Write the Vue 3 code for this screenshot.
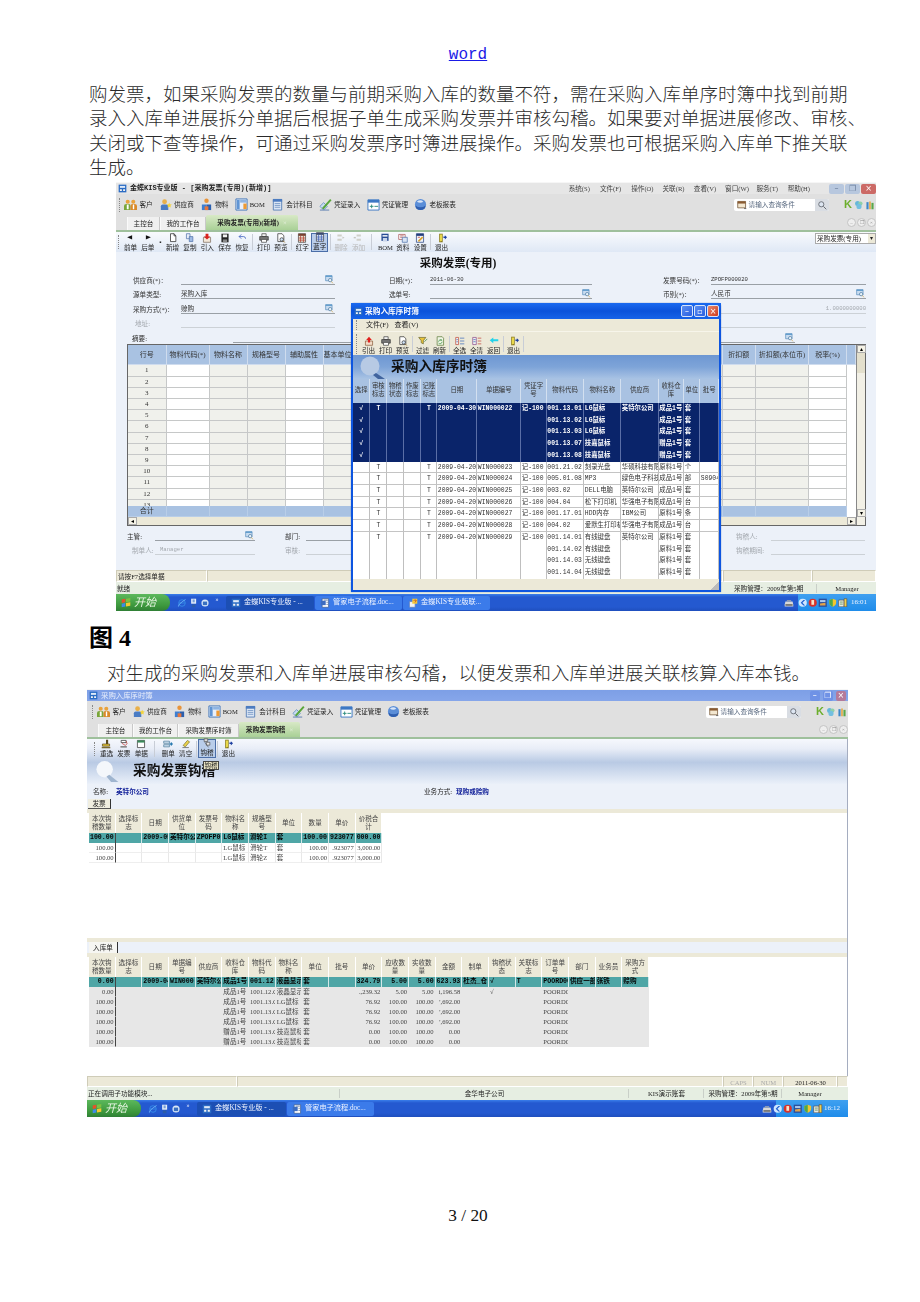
<template>
  <div class="page">
    <div class="word"><u>word</u></div>
    <p class="para">
      <span v-for="line in para1" :key="line" class="ln">{{ line }}</span>
    </p>

    <!-- first screenshot: purchase invoice form -->
    <section class="shot s1">
      <div class="title">
        <svg class="ico t-ico" viewBox="0 0 14 14"><path v-for="(p, i) in icons.app" :key="i" :d="p[0]" :fill="p[1]" /></svg>
        <b class="mono7">金蝶KIS专业版 - [采购发票(专用)(新增)]</b>
        <div class="menus">
          <span v-for="m in mainMenu" :key="m">{{ m }}</span>
        </div>
        <div class="wbtns muted">
          <i class="wb">–</i><i class="wb">❐</i><i class="wb red">×</i>
        </div>
      </div>
      <div class="tb1">
        <span class="grip"></span>
        <div v-for="item in tb1" :key="item[1]" class="tb1-item">
          <svg class="ico" viewBox="0 0 14 14"><path v-for="(p, i) in icons[item[0]]" :key="i" :d="p[0]" :fill="p[1]" :stroke="p[2] || 'none'" /></svg>
          <span>{{ item[1] }}</span>
        </div>
        <div class="search">
          <svg class="ico small" viewBox="0 0 14 14"><path v-for="(p, i) in icons.cal" :key="i" :d="p[0]" :fill="p[1]" :stroke="p[2] || 'none'" /></svg>
          <span>请输入查询条件</span>
          <em class="search-btn"><svg class="ico small" viewBox="0 0 14 14"><path v-for="(p, i) in icons.lens" :key="i" :d="p[0]" :fill="p[1]" :stroke="p[2] || 'none'" /></svg></em>
        </div>
        <div class="brand">
          <b>K</b>
          <svg class="ico small" viewBox="0 0 14 14"><path v-for="(p, i) in icons.recycle" :key="i" :d="p[0]" :fill="p[1]" /></svg>
          <svg class="ico small" viewBox="0 0 14 14"><path v-for="(p, i) in icons.runner" :key="i" :d="p[0]" :fill="p[1]" /></svg>
        </div>
      </div>
      <div class="tabs">
        <span class="tab w33">主控台</span>
        <span class="tab w46">我的工作台</span>
        <span class="tab on w92">采购发票(专用)(新增) <i>×</i></span>
        <span class="dots"><i>–</i><i>❐</i><i>×</i></span>
      </div>
      <div class="gline"></div>
      <div class="tb2 p8">
        <span class="grip"></span>
        <template v-for="(item, k) in tb2a" :key="k">
          <span v-if="item.sep" :class="['sep', { wide: item.wide }]"></span>
          <span v-else-if="item.dot" class="dot">▪</span>
          <div v-else :class="['tb2-item', { hl: item.hl, off: item.off }]">
            <svg class="ico" viewBox="0 0 14 14"><path v-for="(p, i) in icons[item.i]" :key="i" :d="p[0]" :fill="p[1]" :stroke="p[2] || 'none'" /></svg>
            <span>{{ item.t }}</span>
          </div>
        </template>
        <div class="combo">采购发票(专用)<em>▾</em></div>
      </div>

      <div class="form">
        <h2 class="form-title">采购发票(专用)</h2>
        <div class="frow">
          <div class="field"><label class="l48">供应商(*)：</label><div class="val"><svg class="ico lookup" viewBox="0 0 14 14"><path v-for="(p, i) in icons.lookup" :key="i" :d="p[0]" :fill="p[1]" :stroke="p[2] || 'none'" /></svg></div></div>
          <div class="field"><label class="l41">日期(*)：</label><div class="val tiny">2011-06-30</div></div>
          <div class="field"><label class="l48">发票号码(*)：</label><div class="val tiny">ZPOFP000020</div></div>
        </div>
        <div class="frow">
          <div class="field"><label class="l48">源单类型:</label><div class="val">采购入库</div></div>
          <div class="field"><label class="l41">选单号:</label><div class="val"><svg class="ico lookup" viewBox="0 0 14 14"><path v-for="(p, i) in icons.lookup" :key="i" :d="p[0]" :fill="p[1]" :stroke="p[2] || 'none'" /></svg></div></div>
          <div class="field"><label class="l48">币别(*)：</label><div class="val">人民币<svg class="ico lookup" viewBox="0 0 14 14"><path v-for="(p, i) in icons.lookup" :key="i" :d="p[0]" :fill="p[1]" :stroke="p[2] || 'none'" /></svg></div></div>
        </div>
        <div class="frow">
          <div class="field"><label class="l48">采购方式(*)：</label><div class="val">赊购<svg class="ico lookup" viewBox="0 0 14 14"><path v-for="(p, i) in icons.lookup" :key="i" :d="p[0]" :fill="p[1]" :stroke="p[2] || 'none'" /></svg></div></div>
          <div class="field"></div>
          <div class="field"><label class="l48"></label><div class="val light right grey tiny">1.0000000000</div></div>
        </div>
        <div class="frow">
          <div class="field"><label class="l48 grey in1">地址:</label><div class="val light"></div></div>
          <div class="field"></div>
          <div class="field"><label class="l48"></label><div class="val light"></div></div>
        </div>
        <div class="frow wide">
          <label class="l47">摘要:</label>
          <div class="val"><svg class="ico lookup" viewBox="0 0 14 14"><path v-for="(p, i) in icons.lookup" :key="i" :d="p[0]" :fill="p[1]" :stroke="p[2] || 'none'" /></svg></div>
        </div>

        <div class="sheet">
          <div class="sheet-body">
            <div class="srow shead">
              <span v-for="h in sheetHead" :key="h">{{ h }}</span>
            </div>
            <div class="srows">
              <div v-for="n in 13" :key="n" class="srow">
                <span v-for="(w, c) in sheetWhite" :key="c" :class="{ white: w }">{{ c === 0 ? n : '' }}</span>
              </div>
            </div>
            <div class="srow stotal">
              <span>合计</span>
              <span v-for="c in 9" :key="c"></span>
            </div>
            <div class="hscroll"><em>◂</em><i></i><em>▸</em></div>
          </div>
          <div class="vscroll"><em>▴</em><i></i><em class="down">▾</em></div>
        </div>

        <div class="frow2">
          <div class="field f128"><label class="l28">主管:</label><div class="val"><svg class="ico lookup" viewBox="0 0 14 14"><path v-for="(p, i) in icons.lookup" :key="i" :d="p[0]" :fill="p[1]" :stroke="p[2] || 'none'" /></svg></div></div>
          <div class="field f100"><label class="l21">部门:</label><div class="val"></div></div>
          <div class="field f129 grey"><label class="l35">钩稽人:</label><div class="val light"></div></div>
        </div>
        <div class="frow2">
          <div class="field f128 grey"><label class="l28 in5">制单人:</label><div class="val light tiny pad5">Manager</div></div>
          <div class="field f100 grey"><label class="l21">审核:</label><div class="val light"></div></div>
          <div class="field f129 grey"><label class="l35">钩稽期间:</label><div class="val light"></div></div>
        </div>
      </div>

      <div class="sb1">
        <span class="w91">请按F7选择单据</span><span class="grow"></span><span class="w89s"></span><span class="w53"></span>
      </div>
      <div class="sb2">
        <span class="w617">就绪</span><span class="w71">采购管理：2009年第5期</span><span class="center w60">Manager</span>
      </div>
      <div class="taskbar">
        <div class="start">
          <svg class="flag" viewBox="0 0 14 14"><path d="M1 2l5-1v5l-5 1z" fill="#e8502a" /><path d="M7 1l6-1v5l-6 1z" fill="#7dc142" /><path d="M1 8l5-1v5l-5 1z" fill="#3f8be8" /><path d="M7 7l6-1v5l-6 1z" fill="#f5c92f" /></svg>
          <span>开始</span>
        </div>
        <div class="quick">
          <svg v-for="q in quick" :key="q" class="ico small" viewBox="0 0 14 14"><path v-for="(p, i) in icons[q]" :key="i" :d="p[0]" :fill="p[1]" :stroke="p[2] || 'none'" /></svg>
          <small>»</small>
        </div>
        <div class="task dark w86">
          <svg class="ico small" viewBox="0 0 14 14"><path v-for="(p, i) in icons.app" :key="i" :d="p[0]" :fill="p[1]" /></svg>金蝶KIS专业版 - ...
        </div>
        <div class="task w87">
          <svg class="ico small" viewBox="0 0 14 14"><path v-for="(p, i) in icons.wdoc" :key="i" :d="p[0]" :fill="p[1]" :stroke="p[2] || 'none'" /></svg>管家电子流程.doc...
        </div>
        <div class="task w87">
          <svg class="ico small" viewBox="0 0 14 14"><path v-for="(p, i) in icons.helpk" :key="i" :d="p[0]" :fill="p[1]" :stroke="p[2] || 'none'" /></svg>金蝶KIS专业版联...
        </div>
        <div class="eject"><svg class="ico small" viewBox="0 0 14 14"><path v-for="(p, i) in icons.eject" :key="i" :d="p[0]" :fill="p[1]" /></svg></div>
        <div class="tray w78">
          <svg v-for="q in trayIcons" :key="q" class="ico tray-i" viewBox="0 0 14 14"><path v-for="(p, i) in icons[q]" :key="i" :d="p[0]" :fill="p[1]" :stroke="p[2] || 'none'" /></svg>
          <span>16:01</span>
        </div>
      </div>

      <!-- floating child window -->
      <div class="win">
        <div class="win-title">
          <svg class="ico t-ico" viewBox="0 0 14 14"><path v-for="(p, i) in icons.app" :key="i" :d="p[0]" :fill="p[1]" /></svg>
          <b>采购入库序时簿</b>
          <div class="wbtns">
            <i class="wb">–</i><i class="wb">▫</i><i class="wb red">×</i>
          </div>
        </div>
        <div class="win-menu"><span class="grip"></span><span>文件(F)</span><span>查看(V)</span></div>
        <div class="win-tb">
          <span class="grip"></span>
          <template v-for="(item, k) in tbWin" :key="k">
            <span v-if="item.sep" class="sep thin"></span>
            <div v-else class="tb2-item">
              <svg class="ico" viewBox="0 0 14 14"><path v-for="(p, i) in icons[item.i]" :key="i" :d="p[0]" :fill="p[1]" :stroke="p[2] || 'none'" /></svg>
              <span>{{ item.t }}</span>
            </div>
          </template>
          <span class="sep thin"></span>
        </div>
        <div class="win-banner">
          <svg class="glass" viewBox="0 0 34 24"><circle cx="13" cy="11" r="9.5" fill="#b7cae4" /><path d="M19 18l9 6h-7l-5-4z" fill="#41649e" /></svg>
          <h3>采购入库序时簿</h3>
        </div>
        <div class="wrow whead">
          <span v-for="h in winHead" :key="h">{{ h }}</span>
        </div>
        <div class="wrows">
          <div
            v-for="(row, r) in winRows"
            :key="r"
            :class="['wrow', { sel: r < 5, lined: r >= 5 && r < 11 }]"
          >
            <span v-for="(cell, c) in row" :key="c" :class="{ mid: c < 5 }">{{ cell }}</span>
          </div>
        </div>
        <div class="win-foot"><i class="resize"></i></div>
      </div>
    </section>

    <h1 class="fig">图 4</h1>
    <p class="para indent">对生成的采购发票和入库单进展审核勾稽，以便发票和入库单进展关联核算入库本钱。</p>

    <!-- second screenshot: invoice matching -->
    <section class="shot s2">
      <div class="title blue">
        <svg class="ico t-ico" viewBox="0 0 14 14"><path v-for="(p, i) in icons.app" :key="i" :d="p[0]" :fill="p[1]" /></svg>
        <span>采购入库序时簿</span>
        <div class="wbtns washed">
          <i class="wb">–</i><i class="wb">❐</i><i class="wb red">×</i>
        </div>
      </div>
      <div class="tb1">
        <span class="grip"></span>
        <div v-for="item in tb1" :key="item[1]" class="tb1-item">
          <svg class="ico" viewBox="0 0 14 14"><path v-for="(p, i) in icons[item[0]]" :key="i" :d="p[0]" :fill="p[1]" :stroke="p[2] || 'none'" /></svg>
          <span>{{ item[1] }}</span>
        </div>
        <div class="search">
          <svg class="ico small" viewBox="0 0 14 14"><path v-for="(p, i) in icons.cal" :key="i" :d="p[0]" :fill="p[1]" :stroke="p[2] || 'none'" /></svg>
          <span>请输入查询条件</span>
          <em class="search-btn"><svg class="ico small" viewBox="0 0 14 14"><path v-for="(p, i) in icons.lens" :key="i" :d="p[0]" :fill="p[1]" :stroke="p[2] || 'none'" /></svg></em>
        </div>
        <div class="brand">
          <b>K</b>
          <svg class="ico small" viewBox="0 0 14 14"><path v-for="(p, i) in icons.recycle" :key="i" :d="p[0]" :fill="p[1]" /></svg>
          <svg class="ico small" viewBox="0 0 14 14"><path v-for="(p, i) in icons.runner" :key="i" :d="p[0]" :fill="p[1]" /></svg>
        </div>
      </div>
      <div class="tabs">
        <span class="tab w35">主控台</span>
        <span class="tab w45">我的工作台</span>
        <span class="tab w61">采购发票序时簿</span>
        <span class="tab on w61">采购发票钩稽 <i>×</i></span>
        <span class="dots"><i>–</i><i>❐</i><i>×</i></span>
      </div>
      <div class="gline"></div>
      <div class="body2">
        <div class="band">
          <div class="tb2 p10">
            <span class="grip"></span>
            <template v-for="(item, k) in tb2b" :key="k">
              <span v-if="item.sep" :class="['sep', { wide: item.wide }]"></span>
              <div v-else :class="['tb2-item', { hl: item.hl }]">
                <svg class="ico" viewBox="0 0 14 14"><path v-for="(p, i) in icons[item.i]" :key="i" :d="p[0]" :fill="p[1]" :stroke="p[2] || 'none'" /></svg>
                <span>{{ item.t }}</span>
              </div>
            </template>
          </div>
          <div class="band-head">
            <svg class="glass2" viewBox="0 0 30 24"><circle cx="13" cy="9" r="9" fill="#f4f7fb" /><path d="M18 15l10 8h-8l-5-6z" fill="#9fb5cf" /></svg>
            <h3>采购发票钩稽</h3>
            <span class="tip">钩稽</span>
          </div>
        </div>
        <div class="meta">
          <span class="m-l">名称:</span><b class="m-v w308">英特尔公司</b>
          <span class="m-l2">业务方式:</span><b class="m-v">现购或赊购</b>
        </div>
        <div class="tabline"><span class="mini-tab">发票</span></div>
        <div class="strip"></div>
        <div class="mtable">
          <div class="mrow mhead t11">
            <span v-for="h in upHead" :key="h">{{ h }}</span>
          </div>
          <div v-for="(row, r) in upRows" :key="r" :class="['mrow', 't11', { msel: r === 0 }]">
            <span v-for="(cell, c) in row" :key="c" :class="{ num: c === 0 || c >= 8, first: c === 0 }">{{ cell }}</span>
          </div>
        </div>
        <div class="grow"></div>
        <div class="strip"></div>
        <div class="tabline2"><span class="mini-tab plain">入库单</span></div>
        <div class="strip"></div>
        <div class="mtable">
          <div class="mrow mhead t21">
            <span v-for="h in lowHead" :key="h">{{ h }}</span>
          </div>
          <div v-for="(row, r) in lowRows" :key="r" :class="['mrow', 't21', r === 0 ? 'msel' : 'mgrey']">
            <span v-for="(cell, c) in row" :key="c" :class="{ num: c === 0 || (c >= 10 && c <= 13), first: c === 0 }">{{ cell }}</span>
          </div>
        </div>
        <div class="gap29"></div>
      </div>
      <div class="sb1 tall">
        <span class="w150"></span><span class="grow"></span>
        <span class="lock">CAPS</span><span class="lock">NUM</span><span class="date">2011-06-30</span><span class="w11"></span>
      </div>
      <div class="sb2 tall">
        <span class="w252">正在调用子功能模块...</span>
        <span class="center w289">金华电子公司</span>
        <span class="center w75">KIS演示账套</span>
        <span class="center w78">采购管理：2009年第5期</span>
        <span class="center w56">Manager</span>
      </div>
      <div class="taskbar">
        <div class="start">
          <svg class="flag" viewBox="0 0 14 14"><path d="M1 2l5-1v5l-5 1z" fill="#e8502a" /><path d="M7 1l6-1v5l-6 1z" fill="#7dc142" /><path d="M1 8l5-1v5l-5 1z" fill="#3f8be8" /><path d="M7 7l6-1v5l-6 1z" fill="#f5c92f" /></svg>
          <span>开始</span>
        </div>
        <div class="quick">
          <svg v-for="q in quick" :key="q" class="ico small" viewBox="0 0 14 14"><path v-for="(p, i) in icons[q]" :key="i" :d="p[0]" :fill="p[1]" :stroke="p[2] || 'none'" /></svg>
          <small>»</small>
        </div>
        <div class="task dark w89">
          <svg class="ico small" viewBox="0 0 14 14"><path v-for="(p, i) in icons.app" :key="i" :d="p[0]" :fill="p[1]" /></svg>金蝶KIS专业版 - ...
        </div>
        <div class="task w88">
          <svg class="ico small" viewBox="0 0 14 14"><path v-for="(p, i) in icons.wdoc" :key="i" :d="p[0]" :fill="p[1]" :stroke="p[2] || 'none'" /></svg>管家电子流程.doc...
        </div>
        <div class="eject"><svg class="ico small" viewBox="0 0 14 14"><path v-for="(p, i) in icons.eject" :key="i" :d="p[0]" :fill="p[1]" /></svg></div>
        <div class="tray w72">
          <svg v-for="q in trayIcons" :key="q" class="ico tray-i" viewBox="0 0 14 14"><path v-for="(p, i) in icons[q]" :key="i" :d="p[0]" :fill="p[1]" :stroke="p[2] || 'none'" /></svg>
          <span>16:12</span>
        </div>
      </div>
    </section>

    <div class="pager">3 / 20</div>
  </div>
</template>

<script setup>
const para1 = [
  "购发票，如果采购发票的数量与前期采购入库的数量不符，需在采购入库单序时簿中找到前期",
  "录入入库单进展拆分单据后根据子单生成采购发票并审核勾稽。如果要对单据进展修改、审核、",
  "关闭或下查等操作，可通过采购发票序时簿进展操作。采购发票也可根据采购入库单下推关联",
  "生成。",
];

const mainMenu = ["系统(S)", "文件(F)", "操作(O)", "关联(R)", "查看(V)", "窗口(W)", "服务(T)", "帮助(H)"];

const circle = (x, y, r) => `M${x - r} ${y}a${r} ${r} 0 1 1 ${2 * r} 0a${r} ${r} 0 1 1 ${-2 * r} 0z`;

// [path, fill, stroke]
const icons = {
  app: [["M1 1h12v12H1z", "#2b6cc4"], ["M3 3h8v3H3z", "#dfeaf8"], ["M3 8h3v3H3zM8 8h3v3H8z", "#f4f4f4"]],
  people: [[circle(4, 4, 2.2), "#e9a23b"], [circle(10, 4, 2.2), "#e9a23b"], ["M0 13V8.5Q0 6.5 2.5 6.5h3Q7 6.5 7 8.5V13z", "#7aa63a"], ["M7 13V8.5Q7 6.5 9 6.5h2.5Q14 6.5 14 8.5V13z", "#d98a2a"], ["M3 7h2v5H3zM9.5 7h1.5v5H9.5z", "#fff"]],
  supplier: [[circle(6, 4, 2.6), "#e9b04a"], ["M2 13V9Q2 7 4 7h4Q10 7 10 9v4z", "#4a7cc4"], ["M11 5l.8 1.8 2 .2-1.5 1.3.5 2-1.8-1-1.8 1 .5-2L8.2 7l2-.2z", "#f3d33b"]],
  material: [[circle(7, 3, 2.4), "#e8943a"], ["M2 7h5v6H2z", "#3d7fd2"], ["M7 7h5v6H7z", "#2a5fae"], ["M5 9h4v4H5z", "#e8763a"]],
  bom: [["M1 1h12v12H1z", "#eaf0fa", "#3f73b8"], ["M2 2h3v10H2z", "#5f94d4"], ["M5.5 2h7v3h-7z", "#8fb4e2"], ["M9 6h3.5v6H9z", "#ef9a32"]],
  ledger: [["M2.5 2h9v11h-9z", "#dbe6f5", "#5b82b8"], ["M2 1h10v3H2z", "#4d7cc0"], ["M4 6h6M4 8h6M4 10h6", "none", "#7c9cc8"]],
  voucher: [["M1 9l4-4 4 4-4 4z", "#c8dcf0", "#6d96c4"], ["M3 11L12 1l1.5 1.5L5 12z", "#59a63a"], ["M1 13h10", "none", "#5a7cb0"]],
  vmanage: [["M1 2h12v11H1z", "#fff", "#3c78c4"], ["M1 2h12v3H1z", "#3c78c4"], ["M3 9h4M5 7v4M8 9h4", "none", "#2c8c7c"]],
  report: [[circle(7, 7, 6), "#5b8ed8"], ["M1.5 8Q7 12 12.5 8Q12 13 7 13T1.5 8z", "#2f5fb0"], ["M3 4Q7 1 10 4Q7 6 3 4z", "#d9e6f8"]],
  cal: [["M1 2h11v9H1z", "#f3e7d0", "#6a4a2a"], ["M1 2h11v3H1z", "#8a5a30"], ["M10 12h3", "none", "#333"]],
  lens: [[circle(6, 6, 3.6), "#dde6f2", "#4a4f58"], ["M9 9l4 4", "none", "#3a3f48"]],
  recycle: [[circle(5, 5, 3.5), "#67b7d9"], [circle(9, 5, 3), "#8fd0a8"], [circle(7, 9, 3.6), "#73bfe0"]],
  runner: [["M2 3h3v10H2z", "#3d86c8"], ["M6 2h2v11H6z", "#e6a030"], ["M9 4h3v9H9z", "#5aa84a"]],
  prev: [["M10 3v6L3 6z", "#111"]],
  next: [["M4 3v6l7-3z", "#111"]],
  new: [["M3.5 1h5L11 4v8H3.5z", "#fff", "#222"], ["M8.5 1v3H11", "none", "#222"]],
  copy: [["M2 1h5v7H2z", "#e9eef8", "#4d6fa8"], ["M6 5h5v7H6z", "#9fbbe4", "#4d6fa8"]],
  import: [["M2 6h10v7H2z", "#f4e8d8", "#7a6a5a"], ["M5 1h4v4h2.5L7 9 2.5 5H5z", "#d9241e"]],
  save: [["M2 1h10v12H2z", "#222"], ["M4 2h6v4H4z", "#f1f1f1"], ["M4 9h6v4H4z", "#888"]],
  restore: [["M3 5h6Q12 5 12 8M3 5l3-3M3 5l3 3", "none", "#2a4fb8"]],
  print: [["M4 1h6v4H4z", "#f2f2f2", "#444"], ["M1 5h12v5H1z", "#777", "#333"], ["M3.5 9h7v4h-7z", "#fff", "#444"]],
  preview: [["M2.5 1h6L11 4v8H2.5z", "#fff", "#333"], [circle(8, 9, 2.4), "#cfe3f8", "#333"], ["M10 11l2.5 2.5", "none", "#a77a2a"]],
  redgrid: [["M2 1h10v12H2z", "#eae4d4", "#444"], ["M2 1h10v3H2z", "#7a4030"], ["M5 4v9M9 4v9M2 7h10M2 10h10", "none", "#b23a2a"]],
  bluegrid: [["M2 1h10v12H2z", "#dfe6f2", "#444"], ["M2 1h10v3H2z", "#3a4a70"], ["M5 4v9M9 4v9M2 7h10M2 10h10", "none", "#3a5cb0"]],
  del: [["M2 2h6v3H2zM2 8h6v3H2z", "#cfcfc8"], ["M9 5l3 1.5L9 8z", "#c6c6c0"]],
  add: [["M5 2h6v3H5zM5 8h6v3H5z", "#d0d0ca"], ["M1 5.5h3v2H1z", "#c6c6c0"]],
  bom2: [["M2 1h10v10H2z", "#274c94"], ["M3.5 3h7v2h-7z", "#fff"], ["M4 7h6v5H4z", "#c9d5ea"]],
  info: [["M1 2h9v7H1z", "#fff", "#a85050"], ["M6 6h7v7H6z", "#d8e4f4", "#4a6ea8"], ["M3 4h5M3 6h3", "none", "#a85050"]],
  setup: [["M2 1h10v12H2z", "#eef2fa", "#223d7c"], ["M2 1h10v3H2z", "#223d7c"], ["M4 11l6-6 1.5 1.5-6 6z", "#d8a028"], ["M4 6h3", "none", "#c0392b"]],
  exit: [["M3 1h5v12H3z", "#8a7a20"], ["M4 2h3v9l-3 1z", "#e8d84a"], ["M9 5h2V3l3 3-3 3V7H9z", "#1c3fa0"]],
  export: [["M2 7h10v6H2z", "#f2ddc8", "#8a5a3a"], ["M7 1l4 4.5H8.5V9h-3V5.5H3z", "#e0201c"]],
  filter: [["M1 2h10L7.5 6.5V11l-3-1.5v-3z", "#e9c43a", "#6c6a30"], ["M9 8l4-4", "none", "#2f7d3a"]],
  refresh: [["M3 1h7l2 2v10H3z", "#f0f4e4", "#5a7a3a"], ["M5 8a3 3 0 0 1 5-2M9.5 6h-2M10 8a3 3 0 0 1-5 2", "none", "#2f8a3a"]],
  selall: [["M1 2h4v10H1z", "#f0f0f0", "#c04a3a"], ["M7 3h6M7 7h6M7 11h6", "none", "#3a6ab8"], ["M2 5h2M2 8h2", "none", "#3a6ab8"]],
  clear: [["M1 2h5v10H1z", "#f0f0f0", "#8a4a8a"], ["M8 3h5M8 7h5M8 11h5", "none", "#c0423a"], ["M2 5h3M2 8h3", "none", "#3a6ab8"]],
  back: [["M1 6l5-4v2.5h7v3H6V10z", "#22d3ea"]],
  reselect: [["M7 1h3v6H7z", "#5a4a20"], ["M2 7h10v3H2z", "#e8c83a", "#5a4a20"], ["M1 11h12v2H1z", "#7a6a30"]],
  invoice: [["M3 2h7v3H3z", "#fff", "#333"], ["M10 3Q13 7 9 9L4 6", "none", "#c0332a"], ["M2 10h9v2H2z", "#777"]],
  docs: [["M2 2h10v10H2z", "#fff", "#333"], ["M2 2h10v3H2z", "#3a8a5a"]],
  rm: [["M1 3h8v3H1zM1 8h8v3H1z", "#cfe0f0", "#4a7a9a"], ["M9 6h2V4l3 3-3 3V8H9z", "#2a7ab0"]],
  eraser: [["M3 9l6-7 3 2-6 7z", "#ecd24a", "#7a7430"], ["M2 12h9", "none", "#555"]],
  match: [["M3 1h5v4H3z", "#d8d8d8", "#555"], ["M6 6h5v4H6z", "#e8e8e8", "#555"], ["M4 6l5 7", "none", "#555"]],
  ie: [[circle(7, 7, 4.6), "none", "#3a9aee"], ["M3 7h8", "none", "#3a9aee"], ["M2 12Q1 9 12 2", "none", "#7cc8ff"]],
  pc: [["M3 1h7v7H3z", "#e2ecf8"], ["M4 9h5v4H4z", "#2d5ca8"], ["M5 2h3v4H5z", "#7aa0d8"]],
  ie2: [[circle(7, 7, 5), "#dbe8f8"], ["M4 5h6v5H4z", "#3a70c0"]],
  wdoc: [["M3 1h9v12H3z", "#fff", "#3c5a90"], ["M1 4h7v6H1z", "#3c6cc0"], ["M5 3h6M9 6h2M9 9h2", "none", "#3c5a90"]],
  helpk: [["M2 5h8v8H2z", "#f1f1f1", "#5a7ab8"], ["M6 1h7v7H6z", "#f4c83a"], ["M8 4Q9 2 11 3T9.5 6", "none", "#b03020"]],
  eject: [["M2 5h10l1 4v3H1V9z", "#d8d8d8"], ["M2 9h10v1.5H2z", "#333"], ["M4 3h6v2H4z", "#9aa4b4"]],
  chev: [[circle(7, 7, 6), "#cfe6ff"], ["M8 3L4 7l4 4h2.5l-4-4 4-4z", "#1e5fd0"]],
  rising: [[circle(7, 7, 6), "#d8322a"], ["M5 3h4v7H5z", "#f7e3c8"]],
  boxes: [["M1 1h12v12H1z", "#2c4f9a"], ["M3 3h8v3H3z", "#a7c6ec"], ["M3 8l8-1v4H3z", "#e0a24a"]],
  shield: [["M7 1l5 2v4q0 4-5 6q-5-2-5-6V3z", "#f3c52e"], ["M7 1v12q-5-2-5-6V3z", "#4ea84a"]],
  sheet: [["M1 3h8v10H1z", "#eceae0", "#555"], ["M9 1h4v12H9z", "#f3d04a", "#555"], ["M3 6h4M3 9h4", "none", "#3a7a3a"]],
  lookup: [["M1 1h10v8H1z", "#c9dcf0", "#4f86b8"], ["M1 1h10v2H1z", "#5e9bcc"], [circle(8, 8, 2.6), "#e9f4fb", "#3f6e98"], ["M9.8 10l2.5 3", "none", "#c89a32"]],
};

const tb1 = [
  ["people", "客户"],
  ["supplier", "供应商"],
  ["material", "物料"],
  ["bom", "BOM"],
  ["ledger", "会计科目"],
  ["voucher", "凭证录入"],
  ["vmanage", "凭证管理"],
  ["report", "老板报表"],
];

const tb2a = [
  { t: "前单", i: "prev" },
  { t: "后单", i: "next" },
  { dot: 1 },
  { t: "新增", i: "new" },
  { t: "复制", i: "copy" },
  { t: "引入", i: "import" },
  { t: "保存", i: "save" },
  { t: "恢复", i: "restore" },
  { sep: 1 },
  { t: "打印", i: "print" },
  { t: "预览", i: "preview" },
  { sep: 1 },
  { t: "红字", i: "redgrid" },
  { t: "蓝字", i: "bluegrid", hl: 1 },
  { sep: 1 },
  { t: "删除", i: "del", off: 1 },
  { t: "添加", i: "add", off: 1 },
  { sep: 1, wide: 1 },
  { t: "BOM", i: "bom2" },
  { t: "资料", i: "info" },
  { t: "设置", i: "setup" },
  { sep: 1 },
  { t: "退出", i: "exit" },
];

const tb2b = [
  { t: "重选", i: "reselect" },
  { t: "发票", i: "invoice" },
  { t: "单据", i: "docs" },
  { sep: 1, wide: 1 },
  { t: "删单", i: "rm" },
  { t: "清空", i: "eraser" },
  { sep: 1 },
  { t: "钩稽", i: "match", hl: 1 },
  { sep: 1 },
  { t: "退出", i: "exit" },
];

const tbWin = [
  { t: "引出", i: "export" },
  { t: "打印", i: "print" },
  { t: "预览", i: "preview" },
  { sep: 1 },
  { t: "过滤", i: "filter" },
  { t: "刷新", i: "refresh" },
  { sep: 1 },
  { t: "全选", i: "selall" },
  { t: "全清", i: "clear" },
  { t: "返回", i: "back" },
  { sep: 1 },
  { t: "退出", i: "exit" },
];

const quick = ["ie", "pc", "ie2"];
const trayIcons = ["chev", "rising", "boxes", "shield", "sheet"];

const sheetHead = ["行号", "物料代码(*)", "物料名称", "规格型号", "辅助属性", "基本单位名称", "", "折扣额", "折扣额(本位币)", "税率(%)", ""];
const sheetWhite = [false, true, false, false, true, false, false, false, false, true];

const winHead = ["选择", "审核标志", "物稽状态", "作废标志", "记账标志", "日期", "单据编号", "凭证字号", "物料代码", "物料名称", "供应商", "收料仓库", "单位", "批号"];
const winRows = [
  ["√", "T", "", "", "T", "2009-04-30", "WIN000022", "记-100", "001.13.01", "LG鼠标", "英特尔公司", "成品1号", "套", ""],
  ["√", "", "", "", "", "", "", "", "001.13.02", "LG鼠标", "", "成品1号", "套", ""],
  ["√", "", "", "", "", "", "", "", "001.13.03", "LG鼠标", "", "成品1号", "套", ""],
  ["√", "", "", "", "", "", "", "", "001.13.07", "技嘉鼠标", "", "赠品1号", "套", ""],
  ["√", "", "", "", "", "", "", "", "001.13.08", "技嘉鼠标", "", "赠品1号", "套", ""],
  ["", "T", "", "", "T", "2009-04-20", "WIN000023", "记-100", "001.21.02", "刻录光盘", "华硕科技有限", "原料1号", "个", ""],
  ["", "T", "", "", "T", "2009-04-20", "WIN000024", "记-100", "005.01.08", "MP3", "绿色电子科技", "成品1号", "部", "S09040"],
  ["", "T", "", "", "T", "2009-04-20", "WIN000025", "记-100", "003.02", "DELL电脑", "英特尔公司", "成品1号", "套", ""],
  ["", "T", "", "", "T", "2009-04-20", "WIN000026", "记-100", "004.04", "松下打印机", "华强电子有限", "成品1号", "台", ""],
  ["", "T", "", "", "T", "2009-04-20", "WIN000027", "记-100", "001.17.01", "HDD内存", "IBM公司", "原料1号", "条", ""],
  ["", "T", "", "", "T", "2009-04-20", "WIN000028", "记-100", "004.02", "爱默生打印机", "华强电子有限", "成品1号", "台", ""],
  ["", "T", "", "", "T", "2009-04-20", "WIN000029", "记-100", "001.14.01", "有线键盘", "英特尔公司", "原料1号", "套", ""],
  ["", "", "", "", "", "", "", "", "001.14.02", "有线键盘", "", "原料1号", "套", ""],
  ["", "", "", "", "", "", "", "", "001.14.03", "无线键盘", "", "原料1号", "套", ""],
  ["", "", "", "", "", "", "", "", "001.14.04", "无线键盘", "", "原料1号", "套", ""],
];

const upHead = ["本次钩稽数量", "选择标志", "日期", "供货单位", "发票号码", "物料名称", "规格型号", "单位", "数量", "单价", "价税合计"];
const upRows = [
  ["100.00", "", "2009-05", "英特尔公司", "ZPOFP000", "LG鼠标", "滑轮I", "套", "100.00", "923077", "000.00"],
  ["100.00", "", "", "", "", "LG鼠标", "滑轮T", "套", "100.00", ".923077", "3,000.00"],
  ["100.00", "", "", "", "", "LG鼠标", "滑轮Z", "套", "100.00", ".923077", "3,000.00"],
];

const lowHead = ["本次钩稽数量", "选择标志", "日期", "单据编号", "供应商", "收料仓库", "物料代码", "物料名称", "单位", "批号", "单价", "应收数量", "实收数量", "金额", "制单", "钩稽状态", "关联标志", "订单单号", "部门", "业务员", "采购方式"];
const lowRows = [
  ["0.00", "", "2009-04", "WIN000", "英特尔公", "成品1号", "001.12.", "液晶显示", "套", "", "324.79", "5.00", "5.00", "623.93", "杜杰_仓", "√", "T", "POORD00", "供应一部", "张铁", "赊购"],
  ["0.00", "", "", "", "", "成品1号", "1001.12.C", "液晶显示", "套", "", ".,239.32", "5.00", "5.00", "i,196.58", "", "√", "", "POORD00C", "", "", ""],
  ["100.00", "", "", "", "", "成品1号", "1001.13.C", "LG鼠标", "套", "", "76.92", "100.00", "100.00", "',692.00", "", "", "", "POORD00C", "", "", ""],
  ["100.00", "", "", "", "", "成品1号", "1001.13.C", "LG鼠标", "套", "", "76.92", "100.00", "100.00", "',692.00", "", "", "", "POORD00C", "", "", ""],
  ["100.00", "", "", "", "", "成品1号", "1001.13.C", "LG鼠标", "套", "", "76.92", "100.00", "100.00", "',692.00", "", "", "", "POORD00C", "", "", ""],
  ["100.00", "", "", "", "", "赠品1号", "1001.13.C", "技嘉鼠标", "套", "", "0.00", "100.00", "100.00", "0.00", "", "", "", "POORD00C", "", "", ""],
  ["100.00", "", "", "", "", "赠品1号", "1001.13.C", "技嘉鼠标", "套", "", "0.00", "100.00", "100.00", "0.00", "", "", "", "POORD00C", "", "", ""],
];
</script>

<style scoped>
.page {
  width: 920px;
  height: 1302px;
  overflow: hidden;
  background: #fff;
  padding: 45px 73px 0 89px;
  box-sizing: border-box;
  font-family: "Liberation Serif", "Noto Sans CJK SC", serif;
  color: #111;
}

.word {
  height: 20px;
  line-height: 20px;
  text-align: center;
  font-family: "Liberation Mono", monospace;
  font-size: 16px;
  color: #1a1ae6;
}

.para {
  margin: 18px 0 0;
  font-size: 18.5px;
  font-weight: 300;
  line-height: 24.4px;
  white-space: nowrap;
  color: #2a2a2a;
}

.ln {
  display: block;
}

.para.indent {
  margin-top: 9px;
  text-indent: 18px;
}

.fig {
  margin: 12px 0 0;
  height: 30px;
  line-height: 30px;
  font-size: 24px;
  font-weight: 700;
  color: #000;
}

.pager {
  margin-top: 90px;
  height: 18px;
  line-height: 18px;
  text-align: center;
  font-size: 17.3px;
}

/* screenshots */
.shot {
  position: relative;
  display: flex;
  flex-direction: column;
  overflow: hidden;
  box-sizing: border-box;
  font-size: 6.6px;
  line-height: 9px;
  color: #222;
  background: #ecf1f9;
  filter: blur(0.4px);
}

.s1 {
  width: 760px;
  height: 429px;
  margin: 1.4px 0 0 27px;
}

.s2 {
  width: 761px;
  height: 428px;
  margin: 2.6px 0 0 -2px;
  background: #fff;
}

.ico {
  flex: none;
  width: 13px;
  height: 13px;
}

.ico.small {
  width: 10px;
  height: 10px;
}

.t-ico {
  width: 9px;
  height: 9px;
}

.mono7 {
  font-family: "Liberation Mono", "Noto Sans CJK SC", monospace;
  font-size: 7px;
}

.title {
  flex: none;
  height: 12px;
  display: flex;
  align-items: center;
  gap: 3px;
  padding-left: 2px;
  background: #e6e6e6;
  border-top: 1px solid #f6f6f6;
  box-sizing: border-box;
}

.title.blue {
  background: linear-gradient(#7d9fe6, #86a6ea);
  color: #e8eefb;
  font-size: 7.4px;
}

.menus {
  margin-left: auto;
  display: flex;
  margin-right: 7px;
  color: #444;
}

.menus span {
  width: 31.3px;
  white-space: nowrap;
}

.wbtns {
  display: flex;
  gap: 1px;
}

.title.blue .wbtns {
  margin-left: auto;
  margin-right: 2px;
  gap: 2.5px;
}

.wb {
  width: 12px;
  height: 11px;
  display: flex;
  align-items: center;
  justify-content: center;
  font-style: normal;
  font-family: "DejaVu Sans", sans-serif;
  font-size: 8px;
  color: #fff;
  background: linear-gradient(135deg, #5b8ff2, #2a5fe0);
  border-radius: 2px;
}

.wb.red {
  background: linear-gradient(135deg, #e58a70, #cf3b1c);
}

.muted .wb {
  width: 15px;
  height: 10px;
  background: #b7c7de;
  color: #6c7f9c;
}

.muted .wb.red {
  background: #cc6a66;
  color: #fff;
}

.washed .wb {
  width: 10.5px;
  height: 10px;
  background: #6f92e6;
}

.washed .wb.red {
  background: #b47a9a;
}

.tb1 {
  flex: none;
  height: 21px;
  display: flex;
  align-items: center;
  gap: 6.4px;
  padding-left: 3px;
  background: #e0e0e0;
  box-sizing: border-box;
}

.s2 .tb1 {
  padding-left: 5px;
}

.tb1 .grip {
  margin-right: -4px;
}

.grip {
  flex: none;
  width: 2px;
  height: 14px;
  margin-right: 1px;
  border-left: 1px dotted #888;
}

.tb1-item {
  display: flex;
  align-items: center;
  gap: 2px;
}

.search {
  margin-left: auto;
  width: 95px;
  height: 12px;
  display: flex;
  align-items: center;
  gap: 2px;
  padding-left: 3px;
  box-sizing: border-box;
  background: #fff;
  border-radius: 2px;
  color: #5a6a80;
}

.search-btn {
  margin-left: auto;
  width: 14px;
  height: 12px;
  display: flex;
  align-items: center;
  justify-content: center;
  background: #d9dde3;
  border-radius: 0 2px 2px 0;
}

.brand {
  display: flex;
  align-items: center;
  gap: 1px;
  margin: 0 1px 0 8px;
}

.brand b {
  width: 10px;
  text-align: center;
  font-size: 11px;
  color: #6cae2c;
  font-family: "Liberation Sans", sans-serif;
}

.tabs {
  flex: none;
  height: 15px;
  display: flex;
  align-items: flex-end;
  padding-left: 11px;
  background: #e0e0e0;
  box-sizing: border-box;
}

.tab {
  height: 13px;
  display: flex;
  align-items: center;
  justify-content: center;
  flex: none;
  box-sizing: border-box;
  background: #f0f0f0;
  border-right: 1px solid #c8c8c8;
  border-left: 1px solid #fafafa;
  white-space: nowrap;
}

.tab.on {
  height: 15px;
  gap: 4px;
  background: linear-gradient(#d8e9c6, #a9d096);
  font-weight: 700;
  border: 0;
  border-radius: 2px 2px 0 0;
}

.tab i {
  color: #e8f2e0;
  font-style: normal;
  font-weight: 400;
}

.w33 { width: 33px; }
.w46 { width: 46px; }
.w92 { width: 92px; }
.w35 { width: 35px; }
.w45 { width: 45px; }
.w61 { width: 61px; }

.dots {
  margin-left: auto;
  align-self: center;
  display: flex;
  gap: 1px;
}

.dots i {
  width: 7px;
  height: 7px;
  border-radius: 50%;
  background: #eee;
  border: 1px solid #c4c4c4;
  color: #888;
  font-size: 5px;
  line-height: 7px;
  text-align: center;
  font-style: normal;
}

.gline {
  flex: none;
  height: 2px;
  background: #9fc09c;
}

.tb2 {
  flex: none;
  height: 20px;
  display: flex;
  align-items: center;
  box-sizing: border-box;
  background: linear-gradient(#f8fafd, #dfe8f5);
}

.p8 {
  padding-left: 1.8px;
}

.p10 {
  padding-left: 6.8px;
  background: none;
}

.tb2-item {
  flex: none;
  width: 17.4px;
  height: 19px;
  display: flex;
  flex-direction: column;
  align-items: center;
  justify-content: flex-end;
  box-sizing: border-box;
  white-space: nowrap;
}

.tb2-item .ico {
  width: 10px;
  height: 10px;
}

.tb2-item.hl {
  background: #b9cdea;
  border: 1px solid #4b6ea8;
}

.tb2-item.off {
  color: #b7b7b7;
}

.sep {
  flex: none;
  width: 4px;
  height: 16px;
  background: linear-gradient(#c8cdd6, #c8cdd6) center / 1px 100% no-repeat;
}

.sep.wide {
  width: 9.6px;
}

.sep.thin {
  width: 3px;
}

.dot {
  flex: none;
  width: 7.3px;
  text-align: center;
  font-size: 6px;
}

.combo {
  margin-left: auto;
  align-self: flex-start;
  margin-top: 1px;
  width: 61px;
  height: 11px;
  display: flex;
  align-items: center;
  justify-content: space-between;
  padding-left: 1px;
  box-sizing: border-box;
  background: #fff;
  border: 1px solid #aaa;
}

.combo em {
  width: 7px;
  height: 9px;
  background: #ece9d8;
  text-align: center;
  font-style: normal;
  font-size: 6px;
}

/* invoice form */
.form {
  flex: 1;
  display: flex;
  flex-direction: column;
  min-height: 0;
  color: #333;
}

.form-title {
  margin: 4px 0 0;
  height: 14px;
  line-height: 14px;
  width: 684px;
  text-align: center;
  font-size: 11.5px;
  font-weight: 700;
  color: #111;
}

.frow {
  flex: none;
  height: 14.6px;
  display: grid;
  grid-template-columns: 256px 274px 203px;
  padding-left: 17px;
  align-items: end;
}

.frow > :nth-child(1) {
  margin-right: 54px;
}

.frow > :nth-child(2) {
  margin-right: 71px;
}

.frow.wide {
  display: flex;
  padding-left: 16px;
  padding-right: 10px;
}

.field {
  display: flex;
  align-items: flex-end;
  min-height: 10px;
}

.field label,
.frow.wide label {
  flex: none;
  white-space: nowrap;
}

.l48 { width: 48px; }
.l47 { width: 47px; }
.l41 { width: 41px; }
.l35 { width: 35px; }
.l28 { width: 28px; }
.l21 { width: 21px; }

.in5 {
  padding-left: 5px;
  box-sizing: border-box;
}

.in1 {
  padding-left: 2px;
  box-sizing: border-box;
}

.val {
  flex: 1;
  position: relative;
  height: 10px;
  line-height: 9px;
  box-sizing: border-box;
  border-bottom: 1.5px solid #9aa0a6;
  white-space: nowrap;
}

.val.light {
  border-bottom: 1px solid #ccd1d6;
}

.tiny {
  font-family: "Liberation Mono", monospace;
  font-size: 5.6px;
}

.pad5 {
  padding-left: 5px;
}

.right {
  text-align: right;
}

.grey,
.grey label {
  color: #a3a8ae;
}

.lookup {
  position: absolute;
  right: 1px;
  bottom: 0;
  width: 9px;
  height: 9px;
}

.sheet {
  flex: none;
  display: flex;
  margin: 1.5px 0 1px 11px;
  width: 739px;
  height: 182px;
  box-sizing: border-box;
  border: 1px solid #666;
  background: #fff;
}

.sheet-body {
  flex: 1;
  min-width: 0;
  display: flex;
  flex-direction: column;
}

.srow {
  display: grid;
  grid-template-columns: 38.5px 43px 38px 38px 38px 39px 1fr 33.5px 53px 38px 9px;
  height: 11.2px;
}

.srow span {
  text-align: center;
  line-height: 11px;
  overflow: hidden;
  white-space: nowrap;
  background: #f0f1ec;
  border-right: 1px solid #c6c8c8;
  border-bottom: 1px solid #c6c8c8;
  box-sizing: border-box;
  font-size: 7px;
}

.srow span.white {
  background: #fff;
}

.shead {
  flex: none;
  height: 20px;
}

.shead span {
  line-height: 20px;
  background: #a9c2e2;
  border-color: #cfdcee;
}

.srows {
  flex: 1;
  min-height: 0;
  overflow: hidden;
}

.stotal {
  flex: none;
  height: 11px;
}

.stotal span {
  background: #a9c2e2;
  border-color: #b9cee8;
}

.hscroll {
  flex: none;
  height: 8px;
  display: flex;
  justify-content: space-between;
  background: #ece9d8;
}

.hscroll i {
  flex: 1;
}

.hscroll em,
.vscroll em {
  width: 9px;
  height: 8px;
  background: #f4f2e6;
  border: 1px solid #aaa;
  box-sizing: border-box;
  font-style: normal;
  font-family: "DejaVu Sans", sans-serif;
  font-size: 6px;
  line-height: 6px;
  text-align: center;
  color: #000;
}

.vscroll {
  flex: none;
  width: 9px;
  display: flex;
  flex-direction: column;
  background: #f2f0e6;
  border-left: 1px solid #888;
  box-sizing: border-box;
}

.vscroll i {
  height: 20px;
  background: #e3dfcc;
}

.vscroll .down {
  margin-top: auto;
  margin-bottom: 8px;
}

.frow2 {
  flex: none;
  height: 14px;
  display: flex;
  align-items: flex-end;
  padding-left: 11px;
  padding-right: 11px;
}

.f128 {
  width: 128px;
  margin-right: 30px;
}

.f100 {
  width: 120px;
}

.f129 {
  width: 129px;
  margin-left: auto;
}

.sb1 {
  flex: none;
  height: 12px;
  display: flex;
  background: #ece9d8;
}

.sb1 span {
  flex: none;
  line-height: 11px;
  padding-left: 1px;
  box-sizing: border-box;
  border: 1px solid #cfccb8;
  border-right-color: #fff;
  border-bottom-color: #fff;
}

.sb1 .grow {
  flex: 1;
}

.sb2 {
  flex: none;
  height: 12px;
  display: flex;
  align-items: center;
  background: #e6eee2;
}

.sb2 span {
  flex: none;
  padding-left: 1px;
  box-sizing: border-box;
  white-space: nowrap;
}

.tall {
  height: 11px;
}

.sb2.tall {
  height: 13px;
}

.center {
  text-align: center;
}

.sb2 .center {
  border-left: 1px solid #c9cfc8;
}

.sb1 .w91 { width: 91px; }
.sb1 .w89s { width: 89px; }
.sb1 .w53 { width: 64px; }
.sb2 .w617 { width: 617px; }
.sb2 .w71 { width: 83px; }
.sb2 .w60 { width: 60px; }
.sb1 .w150 { width: 150px; }
.sb1 .w11 { width: 11px; }
.sb2 .w252 { width: 252px; }
.sb2 .w289 { width: 289px; }
.sb2 .w75 { width: 75px; }
.sb2 .w78 { width: 78px; }
.sb2 .w56 { width: 56px; }

.sb1 .lock {
  width: 30px;
  text-align: center;
  color: #aaa;
}

.sb1 .date {
  width: 54px;
  text-align: center;
}

.taskbar {
  flex: none;
  height: 17px;
  display: flex;
  align-items: center;
  background: linear-gradient(#3a7eea 0, #2459d0 3px, #2459d0 13px, #1f4fbe 100%);
  color: #eef3ff;
}

.start {
  flex: none;
  width: 54px;
  height: 17px;
  display: flex;
  align-items: center;
  gap: 3px;
  padding-left: 5px;
  box-sizing: border-box;
  background: linear-gradient(#5cb85c, #3c973c 70%, #2f7f35);
  border-radius: 0 8px 8px 0;
  color: #e9f6e4;
  font-size: 11px;
  font-style: italic;
}

.flag {
  width: 10px;
  height: 10px;
}

.quick {
  flex: none;
  display: flex;
  align-items: center;
  gap: 1.5px;
  width: 56px;
  padding-left: 7px;
  box-sizing: border-box;
}

.quick small {
  font-size: 6px;
  margin: -6px 0 0 4px;
}

.task {
  flex: none;
  height: 14px;
  display: flex;
  align-items: center;
  gap: 3px;
  padding-left: 5px;
  margin-right: 1px;
  box-sizing: border-box;
  background: #3b7bea;
  border-radius: 2px;
  white-space: nowrap;
  font-size: 7.2px;
}

.task.dark {
  background: #1c4fb4;
}

.task.w86 { width: 88px; }
.task.w87 { width: 87px; }
.task.w89 { width: 89px; }
.task.w88 { width: 87px; }

.eject {
  margin-left: auto;
  margin-right: 4px;
  display: flex;
}

.tray {
  flex: none;
  height: 17px;
  display: flex;
  align-items: center;
  gap: 0.5px;
  box-sizing: border-box;
  background: linear-gradient(#3fa0f0, #1f8cea);
  white-space: nowrap;
}

.tray span {
  margin-left: 3px;
  font-size: 7px;
}

.tray-i {
  width: 9.5px;
  height: 9.5px;
}

.tray.w78 { width: 78px; }
.tray.w72 { width: 72px; }

.tray.w72 .tray-i:first-child {
  margin-left: -3px;
}

.tray.w72 span {
  margin-left: 1px;
}

/* child window lying over the form */
.win {
  position: absolute;
  left: 235px;
  top: 121px;
  width: 370px;
  height: 289px;
  display: flex;
  flex-direction: column;
  box-sizing: border-box;
  padding: 0 2px 2px;
  background: #0d55e0;
  border-radius: 4px 4px 0 0;
  box-shadow: 0 0 1px #12338a;
}

.win-title {
  flex: none;
  height: 16px;
  display: flex;
  align-items: center;
  gap: 2px;
  background: linear-gradient(#1a6af0, #0b52da 50%, #1763e8);
  color: #fff;
  margin: 0 -2px;
  padding: 0 2px 0 3px;
  font-size: 7.7px;
}

.win-title .wbtns {
  margin-left: auto;
}

.win-title .wb {
  width: 12px;
  height: 12px;
  border: 1px solid #d8e4fa;
  box-sizing: border-box;
}

.win-menu {
  flex: none;
  height: 12px;
  display: flex;
  align-items: center;
  gap: 6px;
  padding-left: 3px;
  background: #ece9d8;
  font-size: 7px;
}

.win-menu .grip {
  height: 10px;
}

.win-tb {
  flex: none;
  height: 24px;
  display: flex;
  align-items: center;
  padding-left: 3px;
  background: #ece9d8;
  border-top: 1px solid #f7f5ea;
  box-sizing: border-box;
}

.win-tb .tb2-item {
  width: 17px;
  height: 22px;
}

.win-tb .grip {
  height: 20px;
}

.win-banner {
  flex: none;
  height: 24px;
  display: flex;
  align-items: center;
  background: linear-gradient(#6d97d2, #7ea4d8 50%, #a9c3e4);
  overflow: hidden;
}

.win-banner h3,
.band-head h3 {
  margin: 0;
  font-size: 13.7px;
  line-height: 16px;
  font-weight: 700;
  color: #111;
}

.glass {
  flex: none;
  width: 34px;
  height: 24px;
  margin: 0 0 0 4px;
}

.wrow {
  display: grid;
  grid-template-columns: 17.3px 17px 17px 17px 16px 40px 44px 25.5px 37.5px 37px 37.5px 25.5px 16px 1fr;
  height: 11.73px;
  background: #fff;
}

.wrow span {
  padding-left: 0.5px;
  overflow: hidden;
  white-space: nowrap;
  line-height: 11px;
  font-family: "Liberation Mono", "Noto Sans CJK SC", monospace;
  font-size: 6.4px;
  box-sizing: border-box;
  border-right: 1px solid #bfbfbf;
  color: #333;
}

.wrow.lined span {
  border-bottom: 1px solid #c4c4c4;
}

.wrow span.mid {
  text-align: center;
  padding: 0;
}

.wrow.sel {
  background: #0a246a;
}

.wrow.sel span {
  color: #fff;
  font-weight: 700;
  border-right-color: #5a6ea6;
}

.whead {
  flex: none;
  height: 24px;
}

.whead span {
  display: flex;
  align-items: center;
  justify-content: center;
  padding: 0;
  white-space: normal;
  text-align: center;
  line-height: 8px;
  background: #a9c2e2;
  border-right-color: #d3e0f0;
}

.wrows {
  flex: 1;
  min-height: 0;
  overflow: hidden;
  background: #fff;
}

.win-foot {
  flex: none;
  height: 11px;
  position: relative;
  background: #ece9d8;
}

.resize {
  position: absolute;
  right: 0;
  bottom: 0;
  width: 8px;
  height: 8px;
  background: linear-gradient(135deg, transparent 50%, #bbb 50%);
}

/* second screenshot body */
.body2 {
  flex: 1;
  min-height: 0;
  display: flex;
  flex-direction: column;
  background: #fff;
  border-right: 1.5px solid #a5adc0;
}

.band {
  flex: none;
  height: 45px;
  background: linear-gradient(#f6f8fd 0, #e8edf7 22%, #b9cae4 52%, #cbd8ec 70%, #eaf0f9 100%);
}

.band .tb2 {
  height: 19px;
}

.band-head {
  position: relative;
  height: 26px;
  display: flex;
  align-items: center;
  padding-left: 46px;
}

.glass2 {
  position: absolute;
  left: 5px;
  top: 3px;
  width: 29px;
  height: 22px;
}

.tip {
  position: absolute;
  left: 116px;
  top: 3px;
  width: 16px;
  height: 9px;
  text-align: center;
  line-height: 8px;
  background: #efe9c8;
  border: 1px solid #444;
  box-sizing: border-box;
  font-size: 6.5px;
}

.meta,
.tabline,
.tabline2 {
  flex: none;
  background: #ecf1f9;
}

.meta {
  height: 15px;
  display: flex;
  align-items: center;
  padding-left: 6px;
}

.m-l {
  width: 23px;
}

.m-v {
  color: #0b1a96;
}

.w308 {
  width: 308px;
}

.m-l2 {
  width: 32px;
}

.tabline {
  height: 10px;
  padding-left: 1px;
}

.mini-tab {
  display: inline-block;
  width: 23px;
  height: 10px;
  line-height: 9px;
  text-align: center;
  box-sizing: border-box;
  background: #f0eee0;
  border-right: 1px solid #333;
  border-bottom: 1px solid #555;
  vertical-align: top;
}

.mini-tab.plain {
  width: 29px;
  height: 11px;
  line-height: 11px;
  background: #f6f6f2;
  border-bottom: 0;
}

.tabline2 {
  height: 11px;
  padding-left: 2px;
}

.strip {
  flex: none;
  height: 4px;
  background: #ece9d8;
}

.mtable {
  flex: none;
  margin-left: 2px;
}

.mrow {
  display: grid;
  height: 10px;
}

.t11 {
  width: 293.4px;
  grid-template-columns: repeat(11, 1fr);
}

.t21 {
  width: 560px;
  grid-template-columns: repeat(21, 1fr);
}

.mrow span {
  min-width: 0;
  overflow: hidden;
  white-space: nowrap;
  padding-left: 1px;
  line-height: 10px;
  box-sizing: border-box;
  font-size: 6.6px;
  border-right: 1px solid #e8e8e8;
  border-bottom: 1px solid #eee;
  color: #444;
}

.mrow span.num {
  text-align: right;
  padding: 0 1px 0 0;
}

.mrow span.first {
  border-right: 1px solid #444;
}

.mhead {
  height: 20px;
}

.mhead span {
  display: flex;
  align-items: center;
  justify-content: center;
  white-space: normal;
  text-align: center;
  padding: 0 2px;
  line-height: 8px;
  font-size: 6.6px;
  background: #ece9d8;
  border-right: 1px solid #fff;
  border-bottom: 0;
}

.msel span {
  background: #4fa6a6;
  font-family: "Liberation Mono", "Noto Sans CJK SC", monospace;
  font-weight: 700;
  color: #050505;
  border-right-color: #d3e8e8;
  border-bottom: 0;
}

.mgrey span {
  background: #e7e7e7;
  border-color: #e7e7e7;
}

.mrow.mgrey span.first {
  border-right-color: #444;
}

.grow {
  flex: 1;
}

.gap29 {
  flex: none;
  height: 29px;
}
</style>
